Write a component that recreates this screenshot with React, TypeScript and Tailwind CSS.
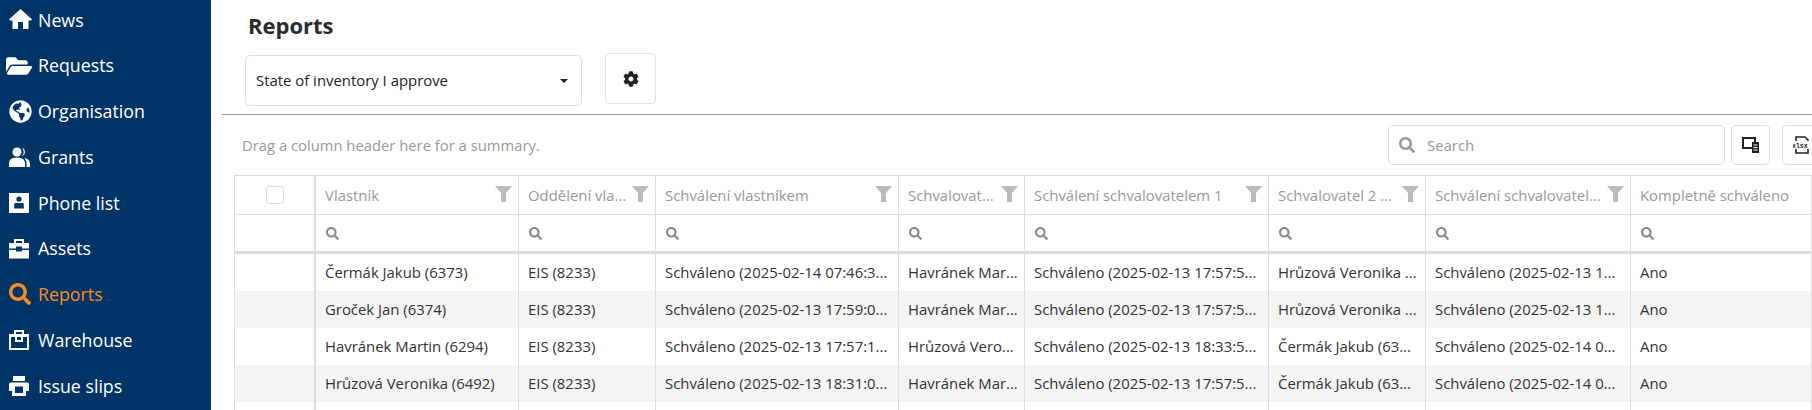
import React from 'react';
import { FaFolderOpen, FaGlobeAmericas, FaCog, FaSearch } from 'react-icons/fa';

const HomeIcon = () => (
  <svg viewBox="0 0 23 21" className="w-[23px] h-[21px]" fill="currentColor">
    <path fillRule="evenodd" d="M11.500 0L23 10.500l-1 1H19.500V20h-5.500v-7H9v7H3.500v-8.500H1l-1-1z" />
  </svg>
);

const GrantsIcon = () => (
  <svg viewBox="0 0 21 21" className="w-[21px] h-[21px]" fill="currentColor">
    <circle cx="8" cy="5" r="4.500" />
    <path d="M0 20v-3.500C0 12.500 3 10.500 8 10.500s8 2 8 6V20z" />
    <path d="M13 .8a4.500 4.500 0 0 1 0 8.400a6 6 0 0 0 0-8.400zM15.500 11c3.500.8 5.500 2.800 5.500 6v3h-3.500v-3.500c0-2.500-.8-4-2-5.500z" />
  </svg>
);

const PortraitIcon = () => (
  <svg viewBox="0 0 20 20" className="w-[20px] h-[20px]" fill="currentColor">
    <path fillRule="evenodd" d="M0 0h20v20H0zM10 3.500a2.600 2.600 0 1 0 0 5.200a2.600 2.600 0 0 0 0-5.200zM6.800 10c-1 0-1.600.7-1.600 1.600V15.500h9.600V11.600c0-.9-.6-1.600-1.600-1.600z" />
  </svg>
);

const AssetsIcon = () => (
  <svg viewBox="0 0 20 20" className="w-[20px] h-[20px]" fill="currentColor">
    <path fillRule="evenodd" d="M5 0h10v4h5v5.500h-7V7.500H7v2H0V4h5zM7 2v2h6V2zM0 11h7v1.500h6V11h7v8.500H0z" />
  </svg>
);

const WarehouseIcon = () => (
  <svg viewBox="0 0 20 20" className="w-[20px] h-[20px]" fill="currentColor">
    <path fillRule="evenodd" d="M5 0h10v4h5v16H0V4h5zM7 2v2h6V2zM2 7v11h16V7h-4v5H6V7zM8 7v3h4V7z" />
  </svg>
);

const PrinterIcon = () => (
  <svg viewBox="0 0 20 20" className="w-[20px] h-[20px]" fill="currentColor">
    <path fillRule="evenodd" d="M4 0h12v5H4zM2 6.500h16c1.200 0 2 .8 2 2V15h-3v5H3v-5H0V8.500c0-1.200.8-2 2-2zM6 10.500V17h8v-6.500z" />
  </svg>
);

const FunnelIcon = () => (
  <svg viewBox="0 0 17 16" className="w-[17px] h-[16px] shrink-0" fill="currentColor">
    <path d="M0 0h17L11 7v9H6V7z" />
  </svg>
);

const ColumnsIcon = () => (
  <svg viewBox="0 0 18 18" className="w-[18px] h-[18px]">
    <path d="M1 2h12v10H1z" fill="none" stroke="#222" strokeWidth="2" />
    <path d="M10 6h7v11h-7z" fill="#222" />
    <path d="M11.500 9h4M11.500 11.500h4M11.500 14h4" stroke="#fff" strokeWidth="1" />
  </svg>
);

const XlsxIcon = () => (
  <svg viewBox="0 0 18 18" className="w-[18px] h-[18px]">
    <path d="M3 5V1h9l3 3v1M3 13v4h12v-4" fill="none" stroke="#222" strokeWidth="1.600" />
    <text x="-1" y="12" fontSize="6.500" fontFamily="Liberation Mono, monospace" fontWeight="700" fill="#222">xlsx</text>
  </svg>
);

const navItems = [
  { label: 'News', icon: <HomeIcon /> },
  { label: 'Requests', icon: <FaFolderOpen className="w-[26px] h-[26px] -ml-[3px]" /> },
  { label: 'Organisation', icon: <FaGlobeAmericas className="w-[23px] h-[23px]" /> },
  { label: 'Grants', icon: <GrantsIcon /> },
  { label: 'Phone list', icon: <PortraitIcon /> },
  { label: 'Assets', icon: <AssetsIcon /> },
  { label: 'Reports', icon: <FaSearch className="w-[22px] h-[22px]" />, active: true },
  { label: 'Warehouse', icon: <WarehouseIcon /> },
  { label: 'Issue slips', icon: <PrinterIcon /> },
];

const columns = [
  { title: 'Vlastník', width: 'w-[203px]' },
  { title: 'Oddělení vla...', width: 'w-[137px]' },
  { title: 'Schválení vlastníkem', width: 'w-[243px]' },
  { title: 'Schvalovat...', width: 'w-[126px]' },
  { title: 'Schválení schvalovatelem 1', width: 'w-[244px]' },
  { title: 'Schvalovatel 2 ...', width: 'w-[157px]' },
  { title: 'Schválení schvalovatel...', width: 'w-[205px]' },
  { title: 'Kompletně schváleno', width: 'flex-1', noFilter: true },
];

const rows = [
  ['Čermák Jakub (6373)', 'EIS (8233)', 'Schváleno (2025-02-14 07:46:3...', 'Havránek Mar...', 'Schváleno (2025-02-13 17:57:5...', 'Hrůzová Veronika ...', 'Schváleno (2025-02-13 1...', 'Ano'],
  ['Groček Jan (6374)', 'EIS (8233)', 'Schváleno (2025-02-13 17:59:0...', 'Havránek Mar...', 'Schváleno (2025-02-13 17:57:5...', 'Hrůzová Veronika ...', 'Schváleno (2025-02-13 1...', 'Ano'],
  ['Havránek Martin (6294)', 'EIS (8233)', 'Schváleno (2025-02-13 17:57:1...', 'Hrůzová Vero...', 'Schváleno (2025-02-13 18:33:5...', 'Čermák Jakub (63...', 'Schváleno (2025-02-14 0...', 'Ano'],
  ['Hrůzová Veronika (6492)', 'EIS (8233)', 'Schváleno (2025-02-13 18:31:0...', 'Havránek Mar...', 'Schváleno (2025-02-13 17:57:5...', 'Čermák Jakub (63...', 'Schváleno (2025-02-14 0...', 'Ano'],
  ['', '', '', '', '', '', '', ''],
];

const App = () => {
  return (
    <div className="flex w-[1812px] h-[410px] overflow-hidden bg-white text-[#333] font-['Open_Sans','Noto_Sans',sans-serif]">
      <aside className="w-[211px] shrink-0 bg-[#003366] -mt-[3px]">
        {navItems.map((item) => (
          <div
            key={item.label}
            className={`flex items-center h-[45.75px] text-[17.8px] ${item.active ? 'text-[#f68b1f]' : 'text-white'}`}
          >
            <div className="w-[38px] pl-[9px] shrink-0 flex items-center">{item.icon}</div>
            <span>{item.label}</span>
          </div>
        ))}
      </aside>

      <main className="flex-1 min-w-0 flex flex-col">
        <h1 className="shrink-0 pl-[37px] pt-[9px] h-[53px] text-[22px] font-bold text-[#2b2b2b]">Reports</h1>

        <div className="shrink-0 flex items-start gap-[23px] pl-[23px] h-[62px] border-b border-[#999] ml-[11px]">
          <div className="w-[337px] h-[51px] mt-[2px] border border-[#ddd] rounded-[5px] flex items-center justify-between pl-[10px] pr-[13px] text-[14.9px] text-[#222]">
            <span>State of inventory I approve</span>
            <span className="w-0 h-0 border-x-[4px] border-x-transparent border-t-[4px] border-t-[#222]" />
          </div>
          <button className="w-[51px] h-[51px] border border-[#dce3ec] rounded-[5px] flex items-center justify-center text-[#222]">
            <FaCog className="w-[16px] h-[16px]" />
          </button>
        </div>

        <div className="shrink-0 flex items-center h-[60px] pl-[31px] pr-0">
          <span className="text-[14.8px] text-[#999]">Drag a column header here for a summary.</span>
          <div className="ml-auto flex items-center w-[424px] shrink-0">
            <div className="w-[337px] shrink-0 h-[40px] border border-[#ddd] rounded-[5px] flex items-center pl-[10px] gap-[12px] text-[14.9px] text-[#999]">
              <FaSearch className="w-[16px] h-[16px] text-[#999]" />
              <span>Search</span>
            </div>
            <button className="w-[39px] shrink-0 h-[40px] ml-[6px] border border-[#ddd] rounded-[5px] flex items-center justify-center">
              <ColumnsIcon />
            </button>
            <button className="w-[39px] shrink-0 h-[40px] ml-[12px] border border-[#ddd] rounded-[5px] flex items-center justify-center">
              <XlsxIcon />
            </button>
          </div>
        </div>

        <div className="shrink-0 ml-[23px] border-t border-l border-[#ddd] text-[14.9px]">
          <div className="flex h-[39px] border-b border-[#ddd]">
            <div className="w-[81px] shrink-0 border-r-[2px] border-[#ddd] flex items-center justify-center">
              <div className="w-[18px] h-[18px] border border-[#ddd] rounded-[3px]" />
            </div>
            {columns.map((col) => (
              <div key={col.title} className={`${col.width} shrink-0 border-r border-[#ddd] flex items-center justify-between pl-[9px] pr-[6px] text-[#999] whitespace-nowrap`}>
                <span>{col.title}</span>
                {!col.noFilter && <span className="text-[#bbb] -mt-[2px]"><FunnelIcon /></span>}
              </div>
            ))}
          </div>
          <div className="flex h-[39px] border-b-[3px] border-[#ddd]">
            <div className="w-[81px] shrink-0 border-r-[2px] border-[#ddd]" />
            {columns.map((col) => (
              <div key={col.title} className={`${col.width} shrink-0 border-r border-[#ddd] flex items-center pl-[10px]`}>
                <FaSearch className="w-[13px] h-[13px] text-[#888]" />
              </div>
            ))}
          </div>
          {rows.map((row, i) => (
            <div key={i} className={`flex h-[37px] ${i % 2 === 1 ? 'bg-[#f4f4f4]' : 'bg-white'}`}>
              <div className="w-[81px] shrink-0 border-r-[2px] border-[#ddd]" />
              {columns.map((col, c) => (
                <div key={col.title} className={`${col.width} shrink-0 border-r border-[#ddd] flex items-center pl-[9px] whitespace-nowrap overflow-hidden text-[#333]`}>
                  {row[c]}
                </div>
              ))}
            </div>
          ))}
        </div>
      </main>
    </div>
  );
};

export default App;
